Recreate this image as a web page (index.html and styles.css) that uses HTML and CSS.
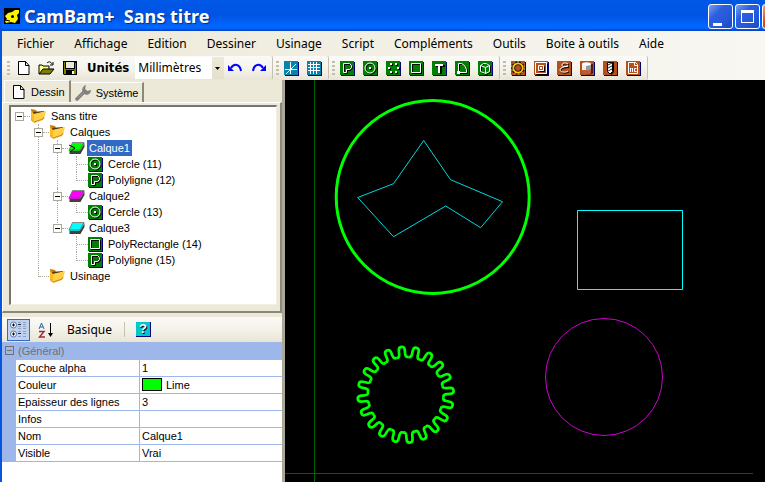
FILE: index.html
```html
<!DOCTYPE html>
<html lang="fr">
<head>
<meta charset="utf-8">
<title>CamBam+ Sans titre</title>
<link rel="stylesheet" href="styles.css">
</head>
<body>
<svg class="defs" aria-hidden="true">
  <symbol id="tile-green" viewBox="0 0 15 15"><path d="M1 1h14v14H1z" fill="#00007c"/><path d="M0 0h14v14H0z" fill="#008000"/></symbol>
  <symbol id="tile-brown" viewBox="0 0 15 15"><path d="M1 1h14v14H1z" fill="#00007c"/><path d="M0 0h14v14H0z" fill="#b4501e"/></symbol>
  <symbol id="i-poly" viewBox="0 0 15 15"><use href="#tile-green"/><path d="M4.5 12.500v-9h6l2 2v2l-2 2h-3v3z" fill="none" stroke="#000"/><path d="M3.500 11.500v-9h6l2 2v2l-2 2h-3v3z" fill="none" stroke="#fff"/></symbol>
  <symbol id="i-circle" viewBox="0 0 15 15"><use href="#tile-green"/><circle cx="8" cy="8" r="5" fill="none" stroke="#000"/><circle cx="7" cy="7" r="5" fill="none" stroke="#fff"/><path d="M7 7h2v2H7z" fill="#000"/><path d="M6 6h2v2H6z" fill="#fff"/></symbol>
  <symbol id="i-points" viewBox="0 0 15 15"><use href="#tile-green"/><path d="M5 3h2v2H5zM10 3h2v2h-2zM3 7h2v2H3zM12 7h2v2h-2zM5 11h2v2H5zM10 11h2v2h-2z" fill="#000"/><path d="M4 2h2v2H4zM9 2h2v2H9zM2 6h2v2H2zM11 6h2v2h-2zM4 10h2v2H4zM9 10h2v2H9z" fill="#fff"/></symbol>
  <symbol id="i-rect" viewBox="0 0 15 15"><use href="#tile-green"/><path d="M3.500 3.500h9v9h-9z" fill="none" stroke="#000"/><path d="M2.500 2.500h9v9h-9z" fill="none" stroke="#fff"/></symbol>
  <symbol id="i-text" viewBox="0 0 15 15"><use href="#tile-green"/><path d="M4 4h9v2H10v7H8V6H4z" fill="#000"/><path d="M3 3h8v2H8v7H6V5H3z" fill="#fff"/></symbol>
  <symbol id="i-arc" viewBox="0 0 15 15"><use href="#tile-green"/><path d="M4.500 12.500v-9h4l4 5v4z" fill="none" stroke="#000"/><path d="M3.500 11.500v-9h3l3 2 2 4v3z" fill="none" stroke="#fff"/><path d="M2 10h3v3H2z" fill="#fff"/></symbol>
  <symbol id="i-cube" viewBox="0 0 15 15"><use href="#tile-green"/><path d="M8.500 13.500l-5-2v-6l3-3h3l3 3v6z" fill="none" stroke="#000"/><path d="M7.500 12.500l-5-2v-6l3-2h3l3 2v6zM2.500 4.500l5 2 4-2M7.500 6.500v6" fill="none" stroke="#fff"/></symbol>
  <symbol id="i-profile" viewBox="0 0 15 15"><use href="#tile-brown"/><circle cx="7" cy="7" r="6" fill="none" stroke="#000" stroke-width="1.500"/><circle cx="7" cy="7" r="3.500" fill="none" stroke="#000"/><circle cx="7" cy="7" r="4.700" fill="none" stroke="#ffc800" stroke-width="1.700"/><circle cx="7" cy="7" r="6.300" fill="none" stroke="#ffe9a0" stroke-width=".8" stroke-dasharray="2 2"/></symbol>
  <symbol id="i-pocket" viewBox="0 0 15 15"><use href="#tile-brown"/><path d="M2.500 13.500h11v-11M5.500 10.500h5v-5" fill="none" stroke="#000"/><path d="M1.500 1.500h11v11h-11zM4.500 4.500h5v5h-5z" fill="none" stroke="#fff"/><path d="M6 6h2v2H6z" fill="#fff"/></symbol>
  <symbol id="i-engrave" viewBox="0 0 15 15"><use href="#tile-brown"/><path d="M12 4C9 2 6 3 6 5s3 2 6 1C6 7 4 8 4 10s5 3 8 1" fill="none" stroke="#000"/><path d="M11 3C8 1 5 2 5 4s3 2 6 1C5 6 3 7 3 9s5 3 8 1" fill="none" stroke="#fff"/></symbol>
  <symbol id="i-drum" viewBox="0 0 15 15"><use href="#tile-brown"/><path d="M3 3h10v9c-2 2-8 2-10 0z" fill="#501c08"/><path d="M2 3h9v9c-2 2-7 2-9 0z" fill="#c05a30"/><path d="M2 3h4v6H2z" fill="#eee"/><path d="M6 3h5v5c-1 1-3 2-5 1z" fill="#999"/><ellipse cx="6.500" cy="3" rx="4.500" ry="1.700" fill="#fff"/></symbol>
  <symbol id="i-drill" viewBox="0 0 15 15"><use href="#tile-brown"/><path d="M10 1h1v10l-3 3v-2l2-2z" fill="#000"/><path d="M4.500 1.500h5v9L7 13l-2.500-2.500z" fill="#fff" stroke="#000"/><path d="M5 4l4-2M5 7l4-2M5 10l4-2" stroke="#222"/></symbol>
  <symbol id="i-nc" viewBox="0 0 15 15"><use href="#tile-brown"/><path d="M2.500 1.500h7l2 2v9h-9zM8.500 1.500v3h3" fill="none" stroke="#fff"/><path d="M4.500 11V7M4.500 7.500h1M6.500 7v4M10.500 7.500h-2v3h2" fill="none" stroke="#fff"/></symbol>
  <symbol id="i-folder" viewBox="0 0 17 16"><path d="M1 1l5 1 1 2h7v4L3 14 1 12z" fill="#c07c10"/><path d="M3 4l11-1v6H3z" fill="#583c08"/><path d="M1 2l3 4 11-2-2 8-9 3-3-4z" fill="#fcb824"/><path d="M4 6l12-3-2 8-10 4z" fill="#ffd04c"/><path d="M4 14l9-3 1-2" fill="none" stroke="#cf8612"/></symbol>
  <symbol id="i-layer" viewBox="0 0 16 13"><path d="M1 8h11l4-7v4l-4 7H1z" fill="#404040"/><path d="M4 1h12l-5 8H0z" fill="currentColor"/><path d="M4 .5h11.500l-4 7.500H.5z" fill="none" stroke="#555" stroke-width=".7"/></symbol>
  <symbol id="i-page" viewBox="0 0 12 14"><path d="M.5.500h7l3.500 4v9H.5z" fill="#fff" stroke="#000"/><path d="M7.500.500v4H11" fill="none" stroke="#000"/></symbol>
</svg>

<div class="window">
  <header class="titlebar">
    <svg class="logo" width="16" height="16" viewBox="0 0 16 16"><path d="M0 0h16v16H0z" fill="#000"/><path d="M1 8l3-3 4-1 3-2h4v3l-2 2 1 4-3 4-4-1-5 1-1-2 2-2z" fill="#fff000"/><circle cx="8.500" cy="8.500" r="1.500" fill="#000"/><path d="M1 12l5 1" stroke="#000"/></svg>
    <h1>CamBam+&nbsp; Sans titre</h1>
    <div class="winbtns">
      <button type="button" aria-label="Réduire"><svg width="25" height="25"><path d="M5 19h9v3H5z" fill="#fff"/></svg></button>
      <button type="button" aria-label="Agrandir"><svg width="25" height="25"><path d="M6 6h13v13H6zM7 9v9h11V9z" fill="#fff" fill-rule="evenodd"/></svg></button>
      <button type="button" class="close" aria-label="Fermer"></button>
    </div>
  </header>

  <nav class="menu">
    <button type="button">Fichier</button><button type="button">Affichage</button><button type="button">Edition</button><button type="button">Dessiner</button><button type="button">Usinage</button><button type="button">Script</button><button type="button">Compléments</button><button type="button">Outils</button><button type="button">Boite à outils</button><button type="button">Aide</button>
  </nav>

  <div class="toolbars">
    <div class="bar">
      <i class="grip"></i>
      <button type="button" aria-label="Nouveau"><svg width="12" height="14"><use href="#i-page"/></svg></button>
      <button type="button" aria-label="Ouvrir"><svg width="17" height="14" viewBox="0 0 17 14"><path d="M1 13V4h3l1 1h6v3" fill="#ffff80" stroke="#000"/><path d="M1 13l4-5h11l-4 5z" fill="#808000" stroke="#000"/><path d="M9 2c2-2 4-1 5 1M15 1v3h-3" fill="none" stroke="#000"/></svg></button>
      <button type="button" aria-label="Enregistrer"><svg width="14" height="14" viewBox="0 0 14 14"><path d="M0 0h14v14H1l-1-1z" fill="#000"/><path d="M1 1h1v7h10V2h1v11H1z" fill="#808000"/><path d="M3 1h8v6H3z" fill="#ece9d8"/><path d="M3 9h8v5H3z" fill="#000"/><path d="M9 10h2v3H9z" fill="#fff"/></svg></button>
      <label for="units">Unités</label>
      <span class="combo"><select id="units"><option>Millimètres</option></select><svg width="5" height="3"><path d="M0 0h5L2.500 3z"/></svg></span>
      <button type="button" aria-label="Annuler"><svg width="15" height="10" viewBox="0 0 15 10"><path d="M3 5c3-5 9-4 10 3" fill="none" stroke="#00f" stroke-width="2"/><path d="M0 2v6h6z" fill="#00f"/></svg></button>
      <button type="button" aria-label="Rétablir"><svg width="15" height="10" viewBox="0 0 15 10"><path d="M12 5C9 0 3 1 2 8" fill="none" stroke="#00f" stroke-width="2"/><path d="M15 2v6H9z" fill="#00f"/></svg></button>
    </div>
    <div class="bar">
      <i class="grip"></i>
      <button type="button" aria-label="Axes"><svg width="15" height="15"><path d="M1 1h14v14H1z" fill="#00007c"/><path d="M0 0h14v14H0z" fill="#0884ac"/><path d="M1 8.500h12M6.500 1v12M2 13L12 3" stroke="#fff"/></svg></button>
      <button type="button" aria-label="Grille"><svg width="15" height="15"><path d="M1 1h14v14H1z" fill="#00007c"/><path d="M0 0h14v14H0z" fill="#0884ac"/><path d="M1 3.500h12M1 6.500h12M1 9.500h12M3.500 1v12M6.500 1v12M9.500 1v12" stroke="#fff"/></svg></button>
    </div>
    <div class="bar">
      <i class="grip"></i>
      <button type="button" aria-label="Polyligne"><svg width="15" height="15"><use href="#i-poly"/></svg></button>
      <button type="button" aria-label="Cercle"><svg width="15" height="15"><use href="#i-circle"/></svg></button>
      <button type="button" aria-label="Liste de points"><svg width="15" height="15"><use href="#i-points"/></svg></button>
      <button type="button" aria-label="Rectangle"><svg width="15" height="15"><use href="#i-rect"/></svg></button>
      <button type="button" aria-label="Texte"><svg width="15" height="15"><use href="#i-text"/></svg></button>
      <button type="button" aria-label="Arc"><svg width="15" height="15"><use href="#i-arc"/></svg></button>
      <button type="button" aria-label="Surface"><svg width="15" height="15"><use href="#i-cube"/></svg></button>
    </div>
    <div class="bar">
      <i class="grip"></i>
      <button type="button" aria-label="Contour"><svg width="15" height="15"><use href="#i-profile"/></svg></button>
      <button type="button" aria-label="Poche"><svg width="15" height="15"><use href="#i-pocket"/></svg></button>
      <button type="button" aria-label="Gravure"><svg width="15" height="15"><use href="#i-engrave"/></svg></button>
      <button type="button" aria-label="Profil 3D"><svg width="15" height="15"><use href="#i-drum"/></svg></button>
      <button type="button" aria-label="Perçage"><svg width="15" height="15"><use href="#i-drill"/></svg></button>
      <button type="button" aria-label="Fichier NC"><svg width="15" height="15"><use href="#i-nc"/></svg></button>
    </div>
  </div>

  <div class="work">
    <aside class="side">
      <div class="tabs" role="tablist">
        <button type="button" role="tab" aria-selected="true"><svg width="12" height="14"><use href="#i-page"/></svg>Dessin</button>
        <button type="button" role="tab" aria-selected="false"><svg width="17" height="17" viewBox="0 0 17 17"><path d="M2 15l8-8" stroke="#808080" stroke-width="3.500" stroke-linecap="round"/><path d="M11 1L10 5l2 2 4-1c0 4-4 6-7 4-3-3-2-8 2-9z" fill="#808080"/><path d="M3 14l6-6" stroke="#999"/></svg>Système</button>
      </div>
      <div class="tabpage">
        <ul class="tree">
          <li><div class="row"><button type="button" class="exp" aria-label="Réduire Sans titre"></button><svg width="17" height="16"><use href="#i-folder"/></svg><span>Sans titre</span></div>
            <ul>
              <li><div class="row"><button type="button" class="exp" aria-label="Réduire Calques"></button><svg width="17" height="16"><use href="#i-folder"/></svg><span>Calques</span></div>
                <ul>
                  <li><div class="row"><button type="button" class="exp" aria-label="Réduire Calque1"></button><svg class="lime" width="17" height="13"><use href="#i-layer"/><path d="M1 3l6 3-5 4" fill="none" stroke="#000"/></svg><span class="sel">Calque1</span></div>
                    <ul>
                      <li><div class="row leaf"><svg width="15" height="15"><use href="#i-circle"/></svg><span>Cercle (11)</span></div></li>
                      <li><div class="row leaf"><svg width="15" height="15"><use href="#i-poly"/></svg><span>Polyligne (12)</span></div></li>
                    </ul></li>
                  <li><div class="row"><button type="button" class="exp" aria-label="Réduire Calque2"></button><svg class="magenta" width="17" height="13"><use href="#i-layer"/></svg><span>Calque2</span></div>
                    <ul>
                      <li><div class="row leaf"><svg width="15" height="15"><use href="#i-circle"/></svg><span>Cercle (13)</span></div></li>
                    </ul></li>
                  <li><div class="row"><button type="button" class="exp" aria-label="Réduire Calque3"></button><svg class="cyan" width="17" height="13"><use href="#i-layer"/></svg><span>Calque3</span></div>
                    <ul>
                      <li><div class="row leaf"><svg width="15" height="15"><use href="#i-rect"/></svg><span>PolyRectangle (14)</span></div></li>
                      <li><div class="row leaf"><svg width="15" height="15"><use href="#i-poly"/></svg><span>Polyligne (15)</span></div></li>
                    </ul></li>
                </ul></li>
              <li><div class="row nobox"><svg width="17" height="16"><use href="#i-folder"/></svg><span>Usinage</span></div></li>
            </ul></li>
        </ul>
      </div>

      <div class="props">
        <div class="proptools">
          <button type="button" class="on" aria-label="Par catégorie"><svg width="17" height="17"><g fill="#fff" stroke="#5c74a8"><circle cx="3.500" cy="4" r="3"/><circle cx="3.500" cy="13" r="3"/></g><path d="M2 4h3M3.500 2.500v3M2 13h3M3.500 11.500v3" stroke="#000"/><path d="M8 3.500h3M8 12.500h3" stroke="#222"/><path d="M8 1.500h3M8 5.500h3M8 7.500h3M8 10.500h3M8 15.500h3M13 1.500h3M13 3.500h3M13 5.500h3M13 7.500h3M13 10.500h3M13 12.500h3M13 15.500h3" stroke="#8ca0c8"/></svg></button>
          <button type="button" class="az" aria-label="Alphabétique"><svg width="16" height="16"><path d="M1 7l2.500-6L6 7M2 5h3" fill="none" stroke="#2868a8"/><path d="M1 9.500h5L1.500 15H7" fill="none" stroke="#a02840" stroke-width="1.500"/><path d="M12.500 1v13" stroke="#000"/><path d="M10 11h5l-2.500 4z"/></svg></button>
          <button type="button" class="basic">Basique</button>
          <i class="sep"></i>
          <button type="button" class="help" aria-label="Aide"><span>?</span></button>
        </div>
        <table>
          <colgroup><col class="c-gut"><col class="c-name"><col></colgroup>
          <thead><tr><th class="gut"><button type="button" class="exp" aria-label="Réduire Général"></button></th><th colspan="2">(Général)</th></tr></thead>
          <tbody>
            <tr><td class="gut"></td><th>Couche alpha</th><td>1</td></tr>
            <tr><td class="gut"></td><th>Couleur</th><td><i class="swatch"></i>Lime</td></tr>
            <tr><td class="gut"></td><th>Epaisseur des lignes</th><td>3</td></tr>
            <tr><td class="gut"></td><th>Infos</th><td></td></tr>
            <tr><td class="gut"></td><th>Nom</th><td>Calque1</td></tr>
            <tr><td class="gut"></td><th>Visible</th><td>Vrai</td></tr>
          </tbody>
        </table>
      </div>
    </aside>

    <main class="canvas">
      <svg width="100%" height="100%" role="img" aria-label="Dessin" fill="none">
        <defs>
          <path id="tooth" d="M-6 -37.500L-4.500 -37.500Q-3 -38 -3 -41V-44.500C-3 -49.300 3 -49.300 3 -44.500V-41Q3 -38 4.500 -37.500L6 -37.500"/>
          <g id="quad"><use href="#tooth"/><use href="#tooth" transform="rotate(18)"/><use href="#tooth" transform="rotate(36)"/><use href="#tooth" transform="rotate(54)"/><use href="#tooth" transform="rotate(72)"/></g>
        </defs>
        <path d="M0 393.500h468" stroke="#c00000"/>
        <path d="M29.500 0v402" stroke="#006400"/>
        <circle cx="147.700" cy="117" r="96.500" stroke="#0f0" stroke-width="3"/>
        <path d="M138.700 60.500L165.500 99.700 217.500 121.700 195.700 147.700 160.700 126 108.500 156.700 72.700 117.500 108.500 103.700z" stroke="#00d8e0"/>
        <path d="M292.500 130.500h105v79h-105z" stroke="#0ff"/>
        <circle cx="319" cy="297" r="58.500" stroke="#d000d0"/>
        <g transform="translate(120.700 314.700) rotate(-5)" stroke="#0f0" stroke-width="2.700">
          <use href="#quad"/><use href="#quad" transform="rotate(90)"/><use href="#quad" transform="rotate(180)"/><use href="#quad" transform="rotate(270)"/>
        </g>
      </svg>
    </main>
  </div>
</div>
</body>
</html>
```
FILE: styles.css
```css
* { box-sizing: border-box; }
body {
  margin: 0;
  font: 11px/16px "Liberation Sans", Arial, sans-serif;
  color: #000;
}
button {
  margin: 0;
  padding: 0;
  border: 0;
  background: none;
  font: inherit;
  color: inherit;
}
svg { display: block; flex: none; }
ul { margin: 0; padding: 0; list-style: none; }
.defs { position: absolute; width: 0; height: 0; }

.window {
  display: flex;
  flex-direction: column;
  height: 100vh;
  overflow: hidden;
  background: #ece9d8;
  border-left: 2px solid #0855dd;
}

/* Title bar */
.titlebar {
  display: flex;
  flex: none;
  align-items: center;
  height: 31px;
  padding: 1px 0 0 2px;
  overflow: hidden;
  background: linear-gradient(#0058e6 0, #0054e3 50%, #0062fa 75%, #0068ff 90%, #0040c8 100%);
}
h1 {
  flex: 1;
  margin: 0 0 0 4px;
  font: bold 18px/24px "Noto Sans", sans-serif;
  color: #fff;
  text-shadow: 1px 1px 1px #0a2a80;
  white-space: nowrap;
}
.winbtns { display: flex; gap: 2px; margin-right: -22px; }
.winbtns button {
  width: 25px;
  height: 25px;
  border: 1px solid #fff;
  border-radius: 3px;
  background: linear-gradient(135deg, #7ba2f0, #2b5fe0 35%, #2458d8 70%, #1a48c0);
}
.winbtns button svg { margin: -1px; }
.winbtns .close { background: linear-gradient(135deg, #f0a088, #d84820 40%, #c03810); }

/* Menu */
.menu {
  display: flex;
  flex: none;
  height: 25px;
  padding-left: 5px;
  background: linear-gradient(90deg, #ece9d8, #f8f7f2);
  font: 12px/25px "Noto Sans", sans-serif;
}
.menu button { padding: 0 10px; white-space: nowrap; }

/* Toolbars */
.toolbars {
  display: flex;
  flex: none;
  height: 24px;
  background: linear-gradient(90deg, #ece9d8, #f8f7f2);
}
.bar {
  display: flex;
  align-items: center;
  height: 24px;
  padding: 0 2px;
  border-right: 1px solid #c5c2b2;
  border-radius: 2px;
  background: linear-gradient(#fbfaf6, #f4f2e9 60%, #e8e5d6);
}
.bar button {
  display: flex;
  justify-content: center;
  width: 23px;
}
.grip {
  flex: none;
  width: 3px;
  height: 15px;
  margin: 0 1px;
  background: repeating-linear-gradient(#c1beb0 0 2px, transparent 2px 4px);
}
.bar:first-child .grip { margin: 0 2px 0 3px; }
.bar label {
  margin: 0 6px;
  font: bold 13px/20px "DejaVu Sans Condensed", sans-serif;
}
.combo {
  display: flex;
  position: relative;
  width: 89px;
  height: 22px;
  background: linear-gradient(#ece9d8, #e4e0cc) right / 12px 100% no-repeat #fff;
}
.combo select {
  width: 100%;
  padding: 0 0 0 3px;
  border: 0;
  background: none;
  appearance: none;
  font: 12px/22px "Noto Sans", sans-serif;
  color: #000;
}
.combo svg { position: absolute; right: 4px; top: 10px; pointer-events: none; }

/* Side panel */
.work { display: flex; flex: 1; min-height: 0; }
.side {
  display: flex;
  flex: none;
  flex-direction: column;
  width: 283px;
  border-right: 3px solid #aca899;
}
.tabs { display: flex; flex: none; align-items: flex-end; height: 22px; padding-left: 2px; }
.tabs button {
  display: flex;
  align-items: center;
  gap: 6px;
  height: 20px;
  padding: 0 4px;
  border-right: 2px solid #8c8979;
  border-top: 1px solid #fff;
}
.tabs [aria-selected="true"] { height: 22px; padding-left: 8px; border-left: 1px solid #fff; }
.tabs [aria-selected="false"] { gap: 4px; }
.tabpage {
  flex: none;
  padding: 2px 1px 6px 6px;
  border: 1px solid #fff;
  border-right: 2px solid #8c8979;
  border-bottom: 2px solid #8c8979;
}
.tree {
  min-height: 200px;
  margin-right: 2px;
  padding: 1px 0 0 4px;
  border: 1px solid #f1efe2;
  border-top: 2px solid #77756a;
  border-left: 2px solid #77756a;
  background: #fff;
}
.tree li { position: relative; }
.tree ul { padding-left: 19px; }
.tree ul > li::before {
  content: "";
  position: absolute;
  left: 4px;
  top: 0;
  bottom: 0;
  border-left: 1px dotted #aca899;
}
.tree ul > li:last-child::before { bottom: auto; height: 9px; }
.row { display: flex; align-items: center; position: relative; height: 16px; }
.row::before {
  content: "";
  order: 1;
  width: 6px;
  border-top: 1px dotted #aca899;
}
.row .exp { order: 0; }
.row svg { order: 2; }
.row span { order: 3; margin-left: 2px; padding: 0 2px; white-space: nowrap; }
.leaf::before { width: 11px; margin-left: 5px; }
.nobox::before { width: 10px; margin-left: 5px; }
.leaf span { margin-left: 3px; }
.row .sel { background: #316ac5; color: #fff; }
.lime { color: #0f0; }
.magenta { color: #f0f; }
.cyan { color: #0ff; }
.exp {
  flex: none;
  width: 9px;
  height: 9px;
  border: 1px solid #aca899;
  background: linear-gradient(#000, #000) center / 5px 1px no-repeat #fff;
}

/* Property grid */
.props { flex: 1; margin-top: 4px; background: #fff; }
.proptools {
  display: flex;
  align-items: center;
  height: 25px;
  padding: 0 5px;
  background: linear-gradient(#fbfaf6, #f4f2e9 50%, #e8e5d6);
}
.proptools .on {
  display: grid;
  place-items: center;
  width: 23px;
  height: 22px;
  border: 1px solid #316ac5;
  background: #c1d2ee;
}
.az { margin: 0 8px; }
.basic { margin: 0 5px; font: 12px/20px "Noto Sans", sans-serif; }
.sep { width: 1px; height: 15px; margin: 0 11px 0 7px; background: #c5c2b2; }
.help {
  width: 15px;
  height: 15px;
  background: #00c8c8;
  border-right: 1px solid #00007c;
  border-bottom: 1px solid #00007c;
  font: bold 13px/14px "Liberation Sans", sans-serif;
  color: #fff;
  text-shadow: 1px 1px 0 #000;
}
table { width: 100%; border-spacing: 0; table-layout: fixed; }
.c-gut { width: 14px; }
.c-name { width: 124px; }
th, td {
  height: 17px;
  padding: 0 2px;
  border-bottom: 1px solid #9db7ea;
  font-weight: normal;
  text-align: left;
  white-space: nowrap;
}
thead th { height: 18px; background: #9db7ea; color: #72706a; }
thead .exp {
  display: block;
  margin: 0 auto;
  background: linear-gradient(#72706a, #72706a) center / 5px 1px no-repeat;
  border-color: #72706a;
}
th.gut, td.gut { padding: 0; background: #9db7ea; }
tbody th { border-right: 1px solid #9db7ea; }
.swatch {
  display: inline-block;
  width: 20px;
  height: 13px;
  margin: 1px 4px 0 0;
  border: 1px solid #000;
  background: #0f0;
  vertical-align: top;
}

/* Drawing area */
.canvas { flex: 1; min-width: 0; background: #000; }
```
